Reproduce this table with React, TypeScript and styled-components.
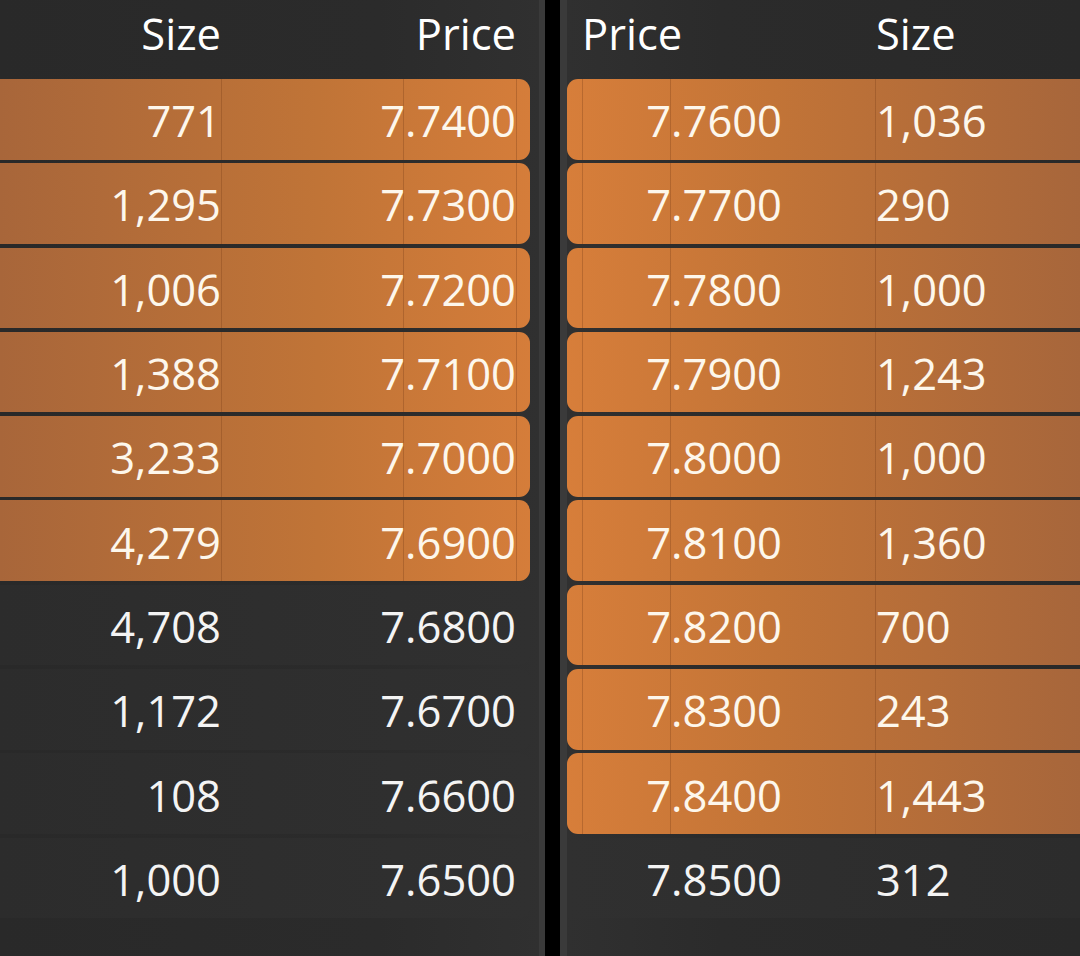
import React from "react";
import styled, { createGlobalStyle, css } from "styled-components";

const GlobalStyle = createGlobalStyle`
  html, body { margin: 0; padding: 0; background: #2a2a2a; }
  body { font-family: "Open Sans", "Noto Sans", sans-serif; }
`;

type Side = "bid" | "ask";

const bids: [string, string, boolean][] = [
  ["771", "7.7400", true],
  ["1,295", "7.7300", true],
  ["1,006", "7.7200", true],
  ["1,388", "7.7100", true],
  ["3,233", "7.7000", true],
  ["4,279", "7.6900", true],
  ["4,708", "7.6800", false],
  ["1,172", "7.6700", false],
  ["108", "7.6600", false],
  ["1,000", "7.6500", false],
];

const asks: [string, string, boolean][] = [
  ["7.7600", "1,036", true],
  ["7.7700", "290", true],
  ["7.7800", "1,000", true],
  ["7.7900", "1,243", true],
  ["7.8000", "1,000", true],
  ["7.8100", "1,360", true],
  ["7.8200", "700", true],
  ["7.8300", "243", true],
  ["7.8400", "1,443", true],
  ["7.8500", "312", false],
];

const Page = styled.div`
  width: 1080px;
  height: 956px;
  display: flex;
  overflow: hidden;
  background: #2a2a2a;
  color: #f4f4f4;
  font-size: 43.5px;
`;

const Panel = styled.section<{ $side: Side }>`
  display: flex;
  flex-direction: column;
  ${(p) =>
    p.$side === "bid"
      ? css`
          width: 539px;
          background: linear-gradient(to right, #292929 0%, #2b2b2b 70%, #303030 100%);
        `
      : css`
          flex: 1;
          background: linear-gradient(to right, #303030 0%, #2b2b2b 30%, #292929 100%);
        `}
`;

const Divider = styled.div`
  width: 28px;
  display: flex;
  flex-shrink: 0;
`;

const Strip = styled.div<{ $w: number; $dark?: boolean }>`
  width: ${(p) => p.$w}px;
  background: ${(p) => (p.$dark ? "#000" : "#3a3a3a")};
`;

const Header = styled.div<{ $side: Side }>`
  height: 79px;
  display: grid;
  align-items: center;
  padding-bottom: 12px;
  box-sizing: border-box;
  color: #ffffff;
  grid-template-columns: ${(p) => (p.$side === "bid" ? "222px 1fr" : "308px 1fr")};
  ${(p) =>
    p.$side === "bid"
      ? css`
          width: 530px;
        `
      : css``}
`;

const Rows = styled.div`
  display: flex;
  flex-direction: column;
  gap: 3.8px;
`;

const lineColor = "rgba(120,60,22,0.32)";

const bidLines = `linear-gradient(to right,
  transparent 221px, ${lineColor} 221px, ${lineColor} 222px, transparent 222px,
  transparent 403px, ${lineColor} 403px, ${lineColor} 404px, transparent 404px,
  transparent 516px, ${lineColor} 516px, ${lineColor} 517px, transparent 517px)`;

const askLines = `linear-gradient(to right,
  transparent 15px, ${lineColor} 15px, ${lineColor} 16px, transparent 16px,
  transparent 103px, ${lineColor} 103px, ${lineColor} 104px, transparent 104px,
  transparent 308px, ${lineColor} 308px, ${lineColor} 309px, transparent 309px)`;

const Row = styled.div<{ $side: Side; $filled: boolean }>`
  height: 80.5px;
  box-sizing: border-box;
  padding-top: 3px;
  display: grid;
  align-items: center;
  white-space: nowrap;
  ${(p) =>
    p.$side === "bid"
      ? css`
          width: 530px;
          border-radius: 0 11px 11px 0;
          grid-template-columns: 222px 1fr;
          background: ${p.$filled
            ? `${bidLines}, linear-gradient(to right, #a8663a 0%, #c07437 60%, #d57d3a 100%)`
            : "linear-gradient(to right, #2c2c2c, #303030)"};
        `
      : css`
          border-radius: 11px 0 0 11px;
          grid-template-columns: 308px 1fr;
          background: ${p.$filled
            ? `${askLines}, linear-gradient(to right, #d77e3a 0%, #c27437 40%, #a7663b 100%)`
            : "linear-gradient(to right, #303030, #2c2c2c)"};
        `}
  color: ${(p) => (p.$filled ? "#fdf7ec" : "#f4f4f4")};
`;

const Cell = styled.div<{ $align: "end" | "start"; $pad: number }>`
  display: flex;
  justify-content: ${(p) => (p.$align === "end" ? "flex-end" : "flex-start")};
  ${(p) =>
    p.$align === "end"
      ? css`
          padding-right: ${p.$pad}px;
        `
      : css`
          padding-left: ${p.$pad}px;
        `}
  min-width: 0;
  line-height: 1.36;
`;

export default function App() {
  return (
    <>
      <GlobalStyle />
      <Page>
        <Panel $side="bid">
          <Header $side="bid">
            <Cell $align="end" $pad={1}>Size</Cell>
            <Cell $align="end" $pad={14}>Price</Cell>
          </Header>
          <Rows>
            {bids.map(([size, price, filled], i) => (
              <Row key={i} $side="bid" $filled={filled}>
                <Cell $align="end" $pad={1}>{size}</Cell>
                <Cell $align="end" $pad={14}>{price}</Cell>
              </Row>
            ))}
          </Rows>
        </Panel>
        <Divider>
          <Strip $w={6} />
          <Strip $w={15} $dark />
          <Strip $w={7} />
        </Divider>
        <Panel $side="ask">
          <Header $side="ask">
            <Cell $align="start" $pad={15}>Price</Cell>
            <Cell $align="start" $pad={1}>Size</Cell>
          </Header>
          <Rows>
            {asks.map(([price, size, filled], i) => (
              <Row key={i} $side="ask" $filled={filled}>
                <Cell $align="end" $pad={93}>{price}</Cell>
                <Cell $align="start" $pad={1}>{size}</Cell>
              </Row>
            ))}
          </Rows>
        </Panel>
      </Page>
    </>
  );
}
